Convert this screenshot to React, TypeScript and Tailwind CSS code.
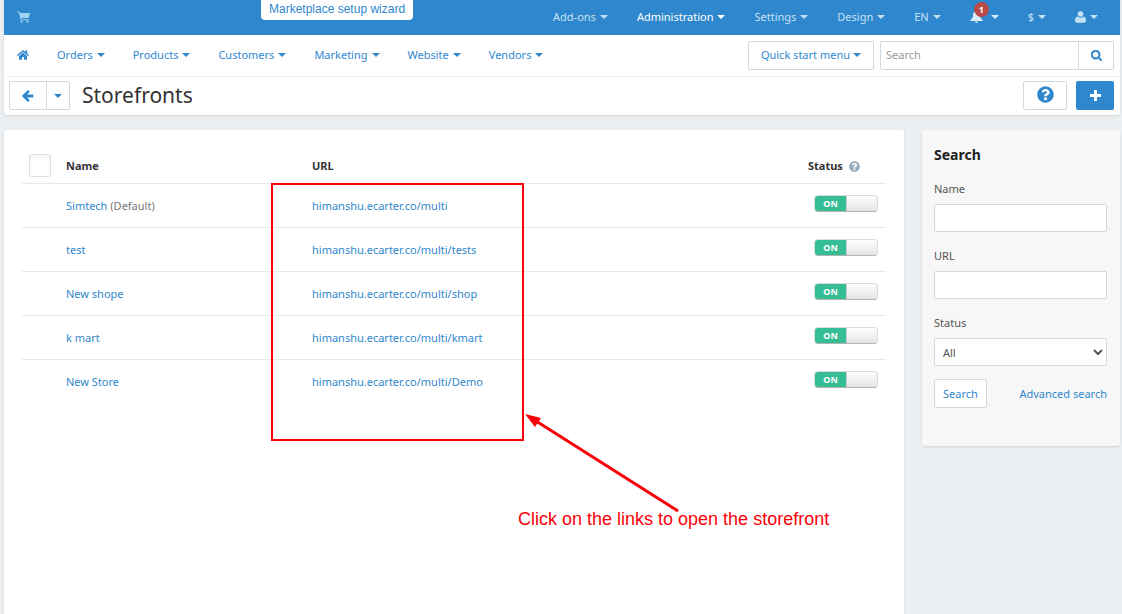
import React, { useState } from 'react';
import { FaHome, FaQuestionCircle } from 'react-icons/fa';

interface Storefront {
  name: string;
  note?: string;
  url: string;
}

const STOREFRONTS: Storefront[] = [
  { name: 'Simtech', note: '(Default)', url: 'himanshu.ecarter.co/multi' },
  { name: 'test', url: 'himanshu.ecarter.co/multi/tests' },
  { name: 'New shope', url: 'himanshu.ecarter.co/multi/shop' },
  { name: 'k mart', url: 'himanshu.ecarter.co/multi/kmart' },
  { name: 'New Store', url: 'himanshu.ecarter.co/multi/Demo' },
];

const MAIN_MENU = ['Orders', 'Products', 'Customers', 'Marketing', 'Website', 'Vendors'];

const CartIcon: React.FC = () => (
  <svg width="13" height="12" viewBox="0 0 13 12" fill="currentColor" aria-hidden="true">
    <path d="M0 0.5h2.6l0.5 1.5H13l-1.3 5H4.4l0.3 1.2H11.5v1H3.8L1.9 1.5H0z" />
    <circle cx="4.6" cy="10.7" r="1.1" />
    <circle cx="10.4" cy="10.7" r="1.1" />
  </svg>
);

const BellIcon: React.FC = () => (
  <svg width="13" height="13" viewBox="0 0 13 13" fill="currentColor" aria-hidden="true">
    <path d="M6.5 0.3c0.7 0 1 0.5 1 1 1.7 0.5 2.4 1.8 2.4 3.4 0 2.6 0.8 3.6 2.8 5.3v1H0.3v-1c2-1.7 2.8-2.7 2.8-5.3 0-1.6 0.7-2.9 2.4-3.4 0-0.5 0.3-1 1-1z" />
    <path d="M5 11.4h3a1.5 1.5 0 0 1-3 0z" />
  </svg>
);

const UserIcon: React.FC = () => (
  <svg width="11" height="12" viewBox="0 0 11 12" fill="currentColor" aria-hidden="true">
    <circle cx="5.5" cy="3" r="2.8" />
    <path d="M2.6 5.4a4.2 4.2 0 0 0 5.8 0C10.2 5.8 11 7.4 11 9.6 11 11 10.2 11.7 9 11.7H2C0.8 11.7 0 11 0 9.6 0 7.4 0.8 5.8 2.6 5.4z" />
  </svg>
);

const ArrowLeftIcon: React.FC = () => (
  <svg width="12" height="12" viewBox="0 0 1536 1600" fill="currentColor" aria-hidden="true">
    <path d="M1472 736v128q0 53-32.5 90.5t-84.5 37.5h-704l293 294q38 36 38 90t-38 90l-75 76q-37 37-90 37-52 0-91-37l-651-652q-37-37-37-90 0-52 37-91l651-650q38-38 91-38 52 0 90 38l75 74q38 38 38 91t-38 91l-293 293h704q52 0 84.5 37.5t32.5 90.5z" />
  </svg>
);

const SearchIcon: React.FC = () => (
  <svg width="11" height="11" viewBox="0 0 1664 1664" fill="currentColor" stroke="currentColor" strokeWidth="60" aria-hidden="true">
    <path d="M1152 704q0-185-131.5-316.5t-316.5-131.5-316.5 131.5-131.5 316.5 131.5 316.5 316.5 131.5 316.5-131.5 131.5-316.5zm512 832q0 52-38 90t-90 38q-54 0-90-38l-343-342q-179 124-399 124-143 0-273.5-55.5t-225-150-150-225-55.5-273.5 55.5-273.5 150-225 225-150 273.5-55.5 273.5 55.5 225 150 150 225 55.5 273.5q0 220-124 399l343 343q37 37 37 90z" />
  </svg>
);

const PlusIcon: React.FC = () => (
  <svg width="11" height="11" viewBox="0 0 11 11" fill="currentColor" aria-hidden="true">
    <path d="M4 0h3v4h4v3H7v4H4V7H0V4h4z" />
  </svg>
);

const Caret: React.FC = () => (
  <span className="inline-block border-x-4 border-t-4 border-x-transparent border-t-current" />
);

const TopBar: React.FC = () => {
  const item = 'flex items-center gap-1 text-[#c5e2f5]';
  return (
    <div className="flex h-[35px] items-start justify-between bg-[#2f87cd] pl-[13px] pr-[22px]">
      <a href="#" aria-label="View storefront" className="flex h-[33px] items-center text-[#9ed3f2]">
        <CartIcon />
      </a>
      <a href="#" className="mr-[140px] ml-auto h-5 rounded-b-[4px] bg-white px-2 font-['Liberation_Sans',sans-serif] text-[12px] leading-[18px] text-[#2f87cd]">
        Marketplace setup wizard
      </a>
      <nav className="flex h-[33px] items-center gap-[29px]">
        <button type="button" className={item}>Add-ons <Caret /></button>
        <button type="button" className="flex items-center gap-1 text-white">Administration <Caret /></button>
        <button type="button" className={item}>Settings <Caret /></button>
        <button type="button" className={item}>Design <Caret /></button>
        <button type="button" className={item}>EN <Caret /></button>
        <button type="button" aria-label="Notifications" className="relative flex items-center gap-2 text-[#d8ecf9]">
          <BellIcon />
          <span className="absolute -top-2 left-1 flex h-[15px] w-[15px] items-center justify-center rounded-full bg-[#b94a48] text-[9px] font-bold text-white">1</span>
          <Caret />
        </button>
        <button type="button" className={item}>$ <Caret /></button>
        <button type="button" aria-label="Account" className={item}><UserIcon /> <Caret /></button>
      </nav>
    </div>
  );
};

const MenuBar: React.FC = () => (
  <div className="flex h-[42px] items-center justify-between border-b border-[#f0f2f3] pr-1.5 pb-px pl-[13px] text-[#2f87cd]">
    <nav className="flex items-center gap-7">
      <a href="#" aria-label="Home"><FaHome size={12} /></a>
      {MAIN_MENU.map((label) => (
        <button key={label} type="button" className="flex items-center gap-1">{label} <Caret /></button>
      ))}
    </nav>
    <div className="flex gap-1.5">
      <button type="button" className="flex h-[29px] items-center gap-[3px] rounded-[2px] border border-[#d0d8e0] px-3">
        Quick start menu <Caret />
      </button>
      <form className="flex h-[29px] w-[234px]" onSubmit={(e) => e.preventDefault()}>
        <input type="text" aria-label="Search" placeholder="Search" className="min-w-0 flex-1 rounded-l-[2px] border border-[#d0d8e0] px-[5px] text-gray-700 placeholder:text-[#999]" />
        <button type="submit" aria-label="Find" className="flex w-[35px] items-center justify-center rounded-r-[2px] border border-l-0 border-[#d0d8e0]">
          <SearchIcon />
        </button>
      </form>
    </div>
  </div>
);

const TitleBar: React.FC = () => (
  <div className="flex h-[38px] items-center pr-1.5 pb-px pl-[5px] text-[#2f87cd]">
    <button type="button" aria-label="Back" className="flex h-[29px] w-[38px] items-center justify-center rounded-l-[2px] border border-[#d0d8e0]"><ArrowLeftIcon /></button>
    <button type="button" aria-label="History" className="flex h-[29px] w-[23px] items-center justify-center rounded-r-[2px] border border-l-0 border-[#d0d8e0]"><Caret /></button>
    <h1 className="ml-3 flex-1 pb-0.5 text-[21px] text-[#333]">Storefronts</h1>
    <button type="button" aria-label="Help" className="flex h-[29px] w-11 items-center justify-center rounded-[2px] border border-[#d0d8e0] pb-0.5"><FaQuestionCircle size={17} /></button>
    <button type="button" aria-label="Add storefront" className="ml-[9px] flex h-[29px] w-[38px] items-center justify-center rounded-[2px] bg-[#2f87cd] text-white"><PlusIcon /></button>
  </div>
);

const StatusSwitch: React.FC<{ name: string }> = ({ name }) => {
  const [on, setOn] = useState(true);
  return (
    <label className="relative flex h-[17px] w-16 overflow-hidden rounded-[4px] border border-[#dcdcdc] border-b-[#b3b3b3] bg-linear-to-b from-white to-[#e4e4e4]">
      <input type="checkbox" role="switch" aria-label={`Status of ${name}`} checked={on} onChange={() => setOn(!on)} className="absolute inset-0 appearance-none" />
      <span className={on ? 'w-8 border-r border-[#ccc] bg-[#35bd95] text-center text-[9px] leading-[15px] font-bold text-white' : 'ml-auto w-8 text-center text-[9px] leading-[15px] font-bold text-[#999]'}>
        {on ? 'ON' : 'OFF'}
      </span>
    </label>
  );
};

const StorefrontTable: React.FC = () => (
  <table className="w-full table-fixed text-left">
    <thead>
      <tr className="h-[35px] border-b border-[#e8e8e8] text-[#333]">
        <th className="w-11 pl-[7px]"><input type="checkbox" aria-label="Select all" className="block h-[23px] w-[22px] appearance-none rounded-[3px] border border-[#ddd] bg-white shadow-inner" /></th>
        <th className="w-[246px] pt-0.5">Name</th>
        <th className="pt-0.5">URL</th>
        <th className="w-[78px] pt-0.5"><span className="flex items-center gap-1.5">Status <FaQuestionCircle size={11} className="text-[#98aabd]" /></span></th>
      </tr>
    </thead>
    <tbody>
      {STOREFRONTS.map((store) => (
        <tr key={store.url} className="h-11 border-b border-[#e8e8e8] last:border-b-0">
          <td />
          <td className="pt-0.5 text-[#777]"><a href="#" className="text-[#2f87cd]">{store.name}</a> {store.note}</td>
          <td className="pt-0.5"><a href="#" className="text-[#2f87cd]">{store.url}</a></td>
          <td className="pb-1 pl-1.5"><StatusSwitch name={store.name} /></td>
        </tr>
      ))}
    </tbody>
  </table>
);

const Annotation: React.FC = () => (
  <div className="pointer-events-none absolute top-[53px] left-[267px] text-[#fb0007]">
    <div className="h-[258px] w-[253px] border-2 border-current" />
    <svg className="absolute top-[230px] left-[253px] overflow-visible" width="156" height="100" viewBox="0 0 156 100" aria-hidden="true">
      <path d="M12 8L154 98" stroke="currentColor" strokeWidth="3" />
      <path d="M1 1L17 5L11 14Z" fill="currentColor" />
    </svg>
    <p className="absolute top-[324px] left-[247px] font-['Liberation_Sans',sans-serif] text-[18px] leading-6 whitespace-nowrap">
      Click on the links to open the storefront
    </p>
  </div>
);

const SearchPanel: React.FC = () => {
  const field = 'h-7 w-full rounded-[2px] border border-[#d0d8e0] bg-white';
  const caption = 'mt-[15px] mb-1.5 block';
  return (
    <aside className="w-[198px] shrink-0 self-start rounded-[3px] bg-[#f7f7f7] pt-[15px] pr-[13px] pb-[38px] pl-3 text-[#555] shadow">
      <h2 className="text-[14px] leading-5 font-bold text-[#222]">Search</h2>
      <form onSubmit={(e) => e.preventDefault()}>
        <label htmlFor="name" className={caption}>Name</label>
        <input id="name" type="text" className={`${field} px-2`} />
        <label htmlFor="url" className={caption}>URL</label>
        <input id="url" type="text" className={`${field} px-2`} />
        <label htmlFor="status" className={caption}>Status</label>
        <select id="status" className={`${field} px-1`}>
          <option>All</option>
          <option>Active</option>
          <option>Disabled</option>
        </select>
        <div className="mt-[13px] flex items-center justify-between text-[#2f87cd]">
          <button type="submit" className="h-[29px] rounded-[2px] border border-[#d0d8e0] bg-white px-2">Search</button>
          <a href="#">Advanced search</a>
        </div>
      </form>
    </aside>
  );
};

const App: React.FC = () => (
  <div className="flex min-h-screen flex-col bg-[#ecf0f3] pr-0.5 pl-1 font-['Noto_Sans','Open_Sans',sans-serif] text-[11px] leading-[18px]">
    <header className="rounded-b-[3px] bg-white shadow">
      <TopBar />
      <MenuBar />
      <TitleBar />
    </header>
    <div className="mt-[15px] flex flex-1 gap-[18px]">
      <main className="relative min-w-0 flex-1 rounded-t-[3px] bg-white px-[18px] pt-[18px] shadow">
        <StorefrontTable />
        <Annotation />
      </main>
      <SearchPanel />
    </div>
  </div>
);

export default App;
